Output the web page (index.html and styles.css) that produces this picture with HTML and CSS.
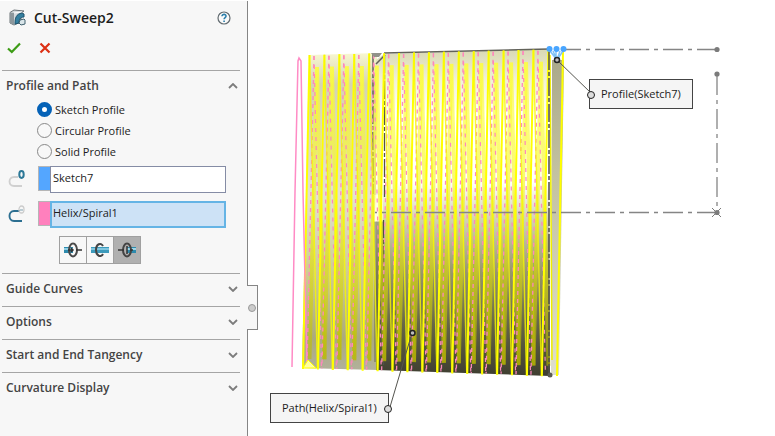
FILE: index.html
```html
<!DOCTYPE html>
<html lang="en">
<head>
<meta charset="utf-8">
<title>Cut-Sweep2</title>
<link rel="stylesheet" href="styles.css">
</head>
<body>
<form class="panel">
  <header class="titlebar">
    <svg class="feature-icon" width="18" height="18" viewBox="0 0 18 18" aria-hidden="true">
      <path d="M1 3.500 5 1l10 1-3 2v9l-7 3-4-2z" fill="#d5dadd" stroke="#6b7377"/>
      <path d="M1 3.500 5 4v12l-4-2z" fill="#8d979c"/>
      <path d="M5 4l8-1" stroke="#fff" fill="none"/>
      <path d="M6 15C6 9 7 5 13 4l2 1v3c-4 0-5 3-5 6z" fill="#347f9f" stroke="#1d526c"/>
      <path d="M11 11l4-1 1 1v4l-4 1-2-2z" fill="#d9e5e9" stroke="#40606e"/>
    </svg>
    <h1>Cut-Sweep2</h1>
    <button type="button" class="plain" aria-label="Help">
      <svg width="14" height="14" viewBox="0 0 14 14"><circle cx="7" cy="7" r="6" fill="#fafafa" stroke="#626b70" stroke-width="1.200"/><path d="M5 5.300C5 2.700 9.200 2.900 9 5.200 8.900 6.600 7.100 6.600 7.100 8.300M7.100 9.500v1.500" fill="none" stroke="#2b7eaa" stroke-width="1.600"/></svg>
    </button>
  </header>
  <div class="actions">
    <button type="button" class="plain" aria-label="OK"><svg width="14" height="12" viewBox="0 0 14 12"><path d="M1 6.500 4.800 10 13 1.500" fill="none" stroke="#3d9c16" stroke-width="2.200"/></svg></button>
    <button type="button" class="plain" aria-label="Cancel"><svg width="12" height="12" viewBox="0 0 12 12"><path d="M1.500 1.500l9 9M10.500 1.500l-9 9" stroke="#dc3014" stroke-width="2.200"/></svg></button>
  </div>
  <section class="group">
    <button type="button" class="group-head" aria-expanded="true"><span>Profile and Path</span><svg width="10" height="6" viewBox="0 0 10 6"><path d="M1 5l4-4 4 4" fill="none" stroke="#7c7c7c" stroke-width="1.800"/></svg></button>
    <div class="choices">
      <label><input type="radio" name="profile" checked>Sketch Profile</label>
      <label><input type="radio" name="profile">Circular Profile</label>
      <label><input type="radio" name="profile">Solid Profile</label>
    </div>
    <div class="selection">
      <label for="profile-field" aria-label="Profile"><svg width="18" height="18" viewBox="0 0 18 18"><path d="M14 17H6c-6 0-6-9 0-9h4" fill="none" stroke="#d0d0d0" stroke-width="1.800"/><ellipse cx="13.500" cy="5.500" rx="2.200" ry="3.400" fill="none" stroke="#2c7897" stroke-width="2"/></svg></label>
      <span class="swatch blue"></span>
      <input id="profile-field" type="text" value="Sketch7">
    </div>
    <div class="selection">
      <label for="path-field" aria-label="Path"><svg width="18" height="18" viewBox="0 0 18 18"><path d="M14 17H6c-6 0-6-10 0-10h6" fill="none" stroke="#2c6f91" stroke-width="1.900"/><ellipse cx="13.500" cy="5.500" rx="2.500" ry="3.500" fill="none" stroke="#ccc" stroke-width="1.300"/><path d="M12 6h3" stroke="#7fa0af"/></svg></label>
      <span class="swatch pink"></span>
      <input id="path-field" class="active" type="text" value="Helix/Spiral1">
    </div>
    <div class="directions">
      <button type="button" aria-label="Direction 1"><svg width="20" height="16" viewBox="0 0 20 16"><path d="M1 8h9" stroke="#2d8aad" stroke-width="6"/><path d="M1 7h9" stroke="#8fd0e6" stroke-width="2"/><ellipse cx="10" cy="8" rx="4" ry="6.500" fill="none" stroke="#4a4a4a" stroke-width="2"/><path d="M5 8h5m-2-2 2 2-2 2M13 8h6" stroke="#333" stroke-width="1.500" fill="none"/></svg></button>
      <button type="button" aria-label="Bidirectional"><svg width="20" height="16" viewBox="0 0 20 16"><path d="M1 8h18" stroke="#3d9abb" stroke-width="6"/><path d="M1 7h18" stroke="#80c6df" stroke-width="2"/><path d="M13 4c-2-4-7-2-7 4s5 8 7 4" fill="none" stroke="#444" stroke-width="2"/></svg></button>
      <button type="button" class="pressed" aria-label="Direction 2"><svg width="20" height="16" viewBox="0 0 20 16"><path d="M10 8h9" stroke="#2d8aad" stroke-width="6"/><path d="M10 7h9" stroke="#9ed7e9" stroke-width="2"/><ellipse cx="10" cy="8" rx="4" ry="6.500" fill="none" stroke="#444" stroke-width="2"/><path d="M1 8h6M10 4v8M13 8h3" stroke="#333" stroke-width="1.500"/></svg></button>
    </div>
  </section>
  <section class="group"><button type="button" class="group-head" aria-expanded="false"><span>Guide Curves</span><svg width="10" height="6" viewBox="0 0 10 6"><path d="M1 1l4 4 4-4" fill="none" stroke="#7c7c7c" stroke-width="1.800"/></svg></button></section>
  <section class="group"><button type="button" class="group-head" aria-expanded="false"><span>Options</span><svg width="10" height="6" viewBox="0 0 10 6"><path d="M1 1l4 4 4-4" fill="none" stroke="#7c7c7c" stroke-width="1.800"/></svg></button></section>
  <section class="group"><button type="button" class="group-head" aria-expanded="false"><span>Start and End Tangency</span><svg width="10" height="6" viewBox="0 0 10 6"><path d="M1 1l4 4 4-4" fill="none" stroke="#7c7c7c" stroke-width="1.800"/></svg></button></section>
  <section class="group"><button type="button" class="group-head" aria-expanded="false"><span>Curvature Display</span><svg width="10" height="6" viewBox="0 0 10 6"><path d="M1 1l4 4 4-4" fill="none" stroke="#7c7c7c" stroke-width="1.800"/></svg></button></section>
  <button type="button" class="handle" aria-label="Collapse panel"></button>
</form>
<main class="viewport">
  <svg class="model" width="527" height="436" viewBox="248 0 527 436" aria-hidden="true">
    <defs>
      <linearGradient id="stem" x2="0" y2="1"><stop offset="0" stop-color="#f8f7d0"/><stop offset=".1" stop-color="#d4d3b4"/><stop offset=".45" stop-color="#e3e2d4"/><stop offset=".7" stop-color="#cdcc90"/><stop offset=".9" stop-color="#aaa97e"/><stop offset="1" stop-color="#b2b19b"/></linearGradient>
      <linearGradient id="block" x2="0" y2="1"><stop offset="0" stop-color="#d8d8b4"/><stop offset=".1" stop-color="#f2f2d8"/><stop offset=".2" stop-color="#fff"/><stop offset=".41" stop-color="#fff"/><stop offset=".52" stop-color="#d2d1b8"/><stop offset=".68" stop-color="#99986c"/><stop offset=".86" stop-color="#606045"/><stop offset="1" stop-color="#3e3e30"/></linearGradient>
      <linearGradient id="end" x2="0" y2="1"><stop offset="0" stop-color="#aaa98a"/><stop offset=".35" stop-color="#c2c1a0"/><stop offset="1" stop-color="#dedece"/></linearGradient>
      <linearGradient id="strand" gradientUnits="userSpaceOnUse" x1="0" y1="60" x2="0" y2="370"><stop offset="0" stop-color="#ffff38"/><stop offset=".5" stop-color="#f5f500"/><stop offset=".8" stop-color="#d2d100"/><stop offset="1" stop-color="#b5b400"/></linearGradient>
    </defs>
    <path d="M309 55l68-2v317l-75-2z" fill="url(#stem)"/>
    <path d="M376 60l8-6 165-5 1 327-174-6z" fill="url(#block)"/>
    <path d="M552 60h12l-5 315h-8z" fill="url(#end)"/>
    <path d="M374 195h9v26h-9z" fill="#fffde6"/>
    <path d="M374 222h9v140h-9z" fill="#4b4b38" opacity=".35"/>
    <path d="M384 53l165-4M376 64l9-9" stroke="#62625a" stroke-width="1.500" fill="none"/>
    <path d="M373 54v140M384.500 55v142M383.500 220v145" fill="none" stroke="#50504a" stroke-width="1.300" stroke-dasharray="18 2 4 2"/>
    <g id="turns"></g>
    <path d="M292 367l3-175 3-131 1-3 2 3 2 131 4 175" fill="none" stroke="#ff8bc5" stroke-width="1.500"/>
    <path d="M549 52v324" fill="none" stroke="#50504a" stroke-width="1.500" stroke-dasharray="18 2 4 2"/>
    <path d="M371 53h11l-3 4h-5z" fill="#92928a"/>
    <path d="M303 368l5-8 8 8z" fill="#ffffa0" stroke="#ffff00"/>
    <circle cx="550" cy="375" r="2.500" fill="#5a5a55"/>
    <g fill="none" stroke="#858585" stroke-width="1.300" stroke-dasharray="20 5 4 5">
      <path d="M717 49.500H564M717 75v137M717 212.500H375"/>
    </g>
    <g fill="#7b7b7b"><circle cx="717" cy="49.500" r="2.600"/><circle cx="717" cy="74" r="2.600"/><circle cx="717" cy="212.500" r="2.600"/></g>
    <path d="M712 208l9 9M721 208l-9 9" stroke="#7b7b7b"/>
    <path d="M550 51l7 9 6-9M556 49v11M553 51l4 9 3-9" fill="none" stroke="#7fc2f5" stroke-width="1.500"/>
    <g fill="#48a5ff"><circle cx="549.500" cy="49" r="3"/><circle cx="556.500" cy="49" r="3"/><circle cx="563.500" cy="49" r="3"/></g>
    <g fill="none" stroke="#55554f"><path d="M557 60l34 33"/><path d="M412 333l-22 74"/></g>
    <g fill="#bbb" stroke="#222" stroke-width="1.500"><circle cx="557" cy="60" r="2.500"/><circle cx="412.500" cy="333" r="2.500"/></g>
  </svg>
  <div class="callout profile-callout">Profile(Sketch7)</div>
  <div class="callout path-callout">Path(Helix/Spiral1)</div>
</main>
<script src="script.js"></script>
</body>
</html>
```
FILE: styles.css
```css
* { box-sizing: border-box; }
body {
  margin: 0;
  padding-top: 1px;
  min-height: 100vh;
  display: flex;
  background: #fff;
  color: #1c1c1c;
  font: 11px/16px "Open Sans", "Noto Sans", sans-serif;
}
button, input { font: inherit; color: inherit; margin: 0; }
button { padding: 0; }
svg { display: block; flex: none; }
.panel {
  position: relative;
  flex: none;
  width: 248px;
  padding: 0 7px 0 2px;
  background: #f7f7f7;
  border-right: 1px solid #858585;
}
.plain { border: 0; background: none; }
.titlebar {
  display: flex;
  align-items: center;
  height: 34px;
  padding: 0 9px 0 7px;
}
h1 { flex: 1; margin: 0 0 0 7px; font-size: 14px; font-weight: 600; line-height: 20px; }
.actions { display: flex; gap: 18px; height: 35px; padding: 7px 5px; }
.actions button { height: 12px; }
.group { border-top: 1px solid #a5a5a5; }
.group-head {
  display: flex;
  align-items: center;
  justify-content: space-between;
  width: 100%;
  height: 32px;
  padding: 0 2px 2px 4px;
  border: 0;
  background: none;
  color: #444;
  font-size: 12px;
  font-weight: 600;
}
.choices { display: grid; padding: 0 0 4px 35px; margin-top: -4px; }
.choices label { display: flex; align-items: center; gap: 3px; height: 21px; }
.choices input {
  appearance: none;
  width: 15px;
  height: 15px;
  border: 1px solid #888;
  border-radius: 50%;
  background: #f8f8f8;
}
.choices input:checked { border: 5px solid #0562b7; background: #fff; }
.selection { display: flex; align-items: flex-start; height: 27px; margin: 0 14px 8px 0; }
.selection label { width: 36px; padding: 3px 0 0 6px; }
.swatch { width: 12px; height: 25px; border: 1px solid #b6b6b6; border-right: 0; }
.blue { background: #54a6ff; }
.pink { background: #ff80bd; }
.selection input {
  flex: 1;
  min-width: 0;
  height: 27px;
  padding: 0 2px 4px;
  border: 1px solid #858ca5;
  background: #fff;
  outline: 0;
}
.selection .active { padding: 0 1px 4px; border: 2px solid #65b4e5; background: #cde2f6; }
.directions { display: flex; padding: 0 0 9px 57px; }
.directions button {
  display: grid;
  place-items: center;
  width: 28px;
  height: 28px;
  margin-right: -1px;
  border: 1px solid #a0a0a0;
  background: #f7f7f7;
}
.directions .pressed { background: #b0b0b0; }
.handle {
  position: absolute;
  left: 247px;
  top: 284px;
  width: 11px;
  height: 45px;
  border: 1px solid #858585;
  border-left: 0;
  background: #f7f7f7;
}
.handle::before {
  content: "";
  display: block;
  width: 6px;
  height: 6px;
  margin-left: 1px;
  border: 1px solid #999;
  border-radius: 50%;
  background: #ccc;
}
.viewport { position: relative; flex: 1; min-width: 0; margin-top: -1px; overflow: hidden; }
.callout {
  position: absolute;
  border: 1px solid #444;
  background: #f5f5f5;
  padding: 6px 11px;
  line-height: 16px;
  white-space: nowrap;
}
.callout::after {
  content: "";
  position: absolute;
  width: 6px;
  height: 6px;
  border: 1px solid #222;
  border-radius: 50%;
  background: #ddd;
}
.profile-callout { left: 341px; top: 79px; }
.profile-callout::after { left: -3px; top: 11px; }
.path-callout { left: 22px; top: 393px; }
.path-callout::after { right: -4px; top: 11px; }
```
FILE: script.js
```js
const turns = document.getElementById("turns");
const pitch = 14.93;

function strand(x1, y1, x2, y2, color, width, dash, opacity) {
  const line = document.createElementNS("http://www.w3.org/2000/svg", "line");
  const attrs = { x1, y1, x2, y2, stroke: color, "stroke-width": width, "stroke-opacity": opacity || 1 };
  if (dash) attrs["stroke-dasharray"] = dash;
  for (const name in attrs) line.setAttribute(name, attrs[name]);
  turns.appendChild(line);
}

// Each turn has a root band between the crests, a crest outline and its helix path.
for (let i = 0; i < 17; i++) {
  const x = 309.5 + i * pitch;
  const top = 55 - i * 0.35;
  const bottom = 369 + i * 0.45;
  if (i < 16) {
    strand(x + 7.5, top + 12, x, bottom - 10, "url(#strand)", 4, null, 0.6);
    strand(x + 7.5, top + 12, x + 15, bottom - 10, "url(#strand)", 4, null, 0.6);
    strand(x + 4.5, top + 1, x - 2.5, bottom - 1, "#ff87bc", 1.3, "4 4");
    strand(x + 4.5, top + 1, x + 12, bottom - 1, "#ff87bc", 1.2, "4 5");
  }
  strand(x, top, x - 6.5, bottom, "#ffff00", 2);
  if (i < 16) {
    strand(x, top, x + 8, bottom, "#f8f800", 1.5, null, 0.8);
  }
}
strand(563, 52, 557, 376, "#ffff00", 2);
strand(550, 55, 552, 360, "#eeee00", 1.5);
```
